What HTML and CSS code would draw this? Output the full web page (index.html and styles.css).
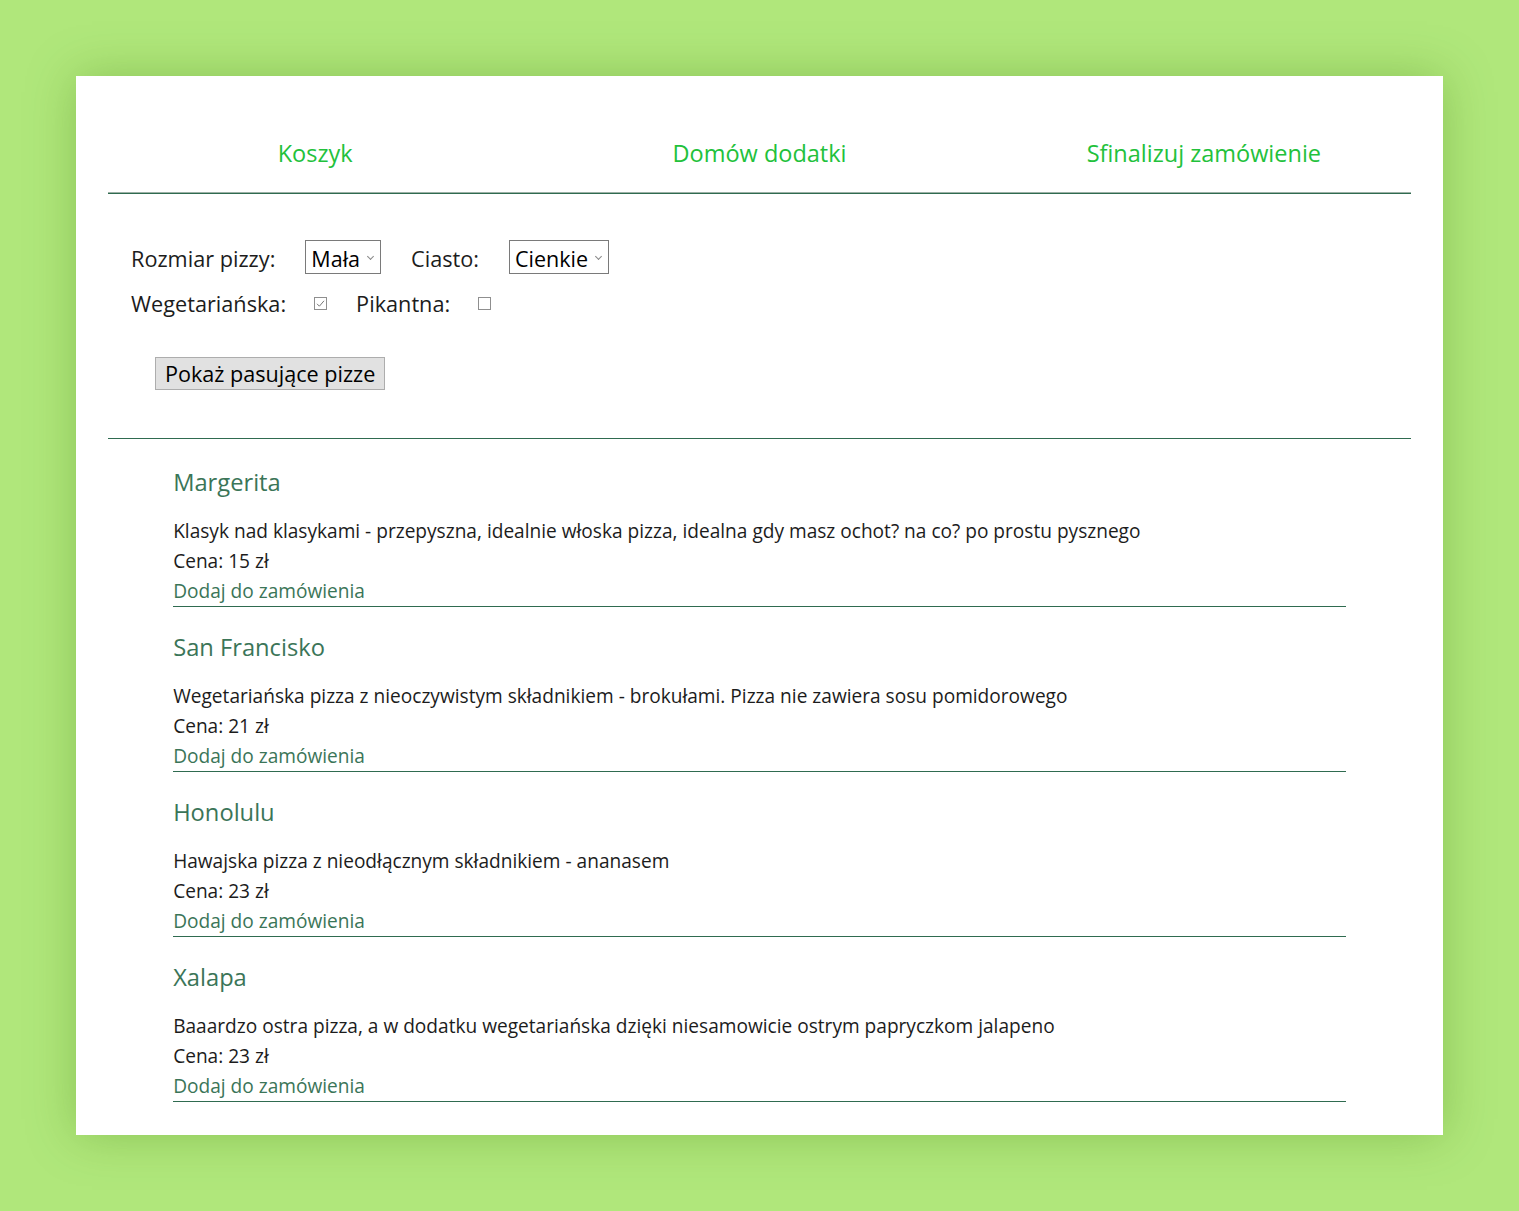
FILE: index.html
```
<!DOCTYPE html>
<html lang="pl">
<head>
<meta charset="utf-8">
<title>Pizza</title>
<link rel="stylesheet" href="styles.css">
</head>
<body>
<div class="page">
  <nav class="nav">
    <a class="nav-link" href="#">Koszyk</a>
    <a class="nav-link" href="#">Domów dodatki</a>
    <a class="nav-link" href="#">Sfinalizuj zamówienie</a>
  </nav>
  <form class="filters">
    <div class="row">
      <span class="label">Rozmiar pizzy:</span>
      <span class="select select-size">Mała<span class="chev"></span></span>
      <span class="label">Ciasto:</span>
      <span class="select select-dough">Cienkie<span class="chev"></span></span>
    </div>
    <div class="row row-checks">
      <span class="label">Wegetariańska:</span>
      <span class="check"><svg viewBox="0 0 13 13" width="13" height="13"><path d="M3 6.8 L5.4 9.2 L10 3.8" fill="none" stroke="#777" stroke-width="1"/></svg></span>
      <span class="label">Pikantna:</span>
      <span class="check"></span>
    </div>
    <div class="btn-row"><span class="btn">Pokaż pasujące pizze</span></div>
  </form>
  <div class="list">
    <div class="item">
      <h3 class="title">Margerita</h3>
      <p class="desc">Klasyk nad klasykami - przepyszna, idealnie włoska pizza, idealna gdy masz ochot? na co? po prostu pysznego</p>
      <p class="price">Cena: 15 zł</p>
      <a class="add" href="#">Dodaj do zamówienia</a>
    </div>
    <div class="item">
      <h3 class="title">San Francisko</h3>
      <p class="desc">Wegetariańska pizza z nieoczywistym składnikiem - brokułami. Pizza nie zawiera sosu pomidorowego</p>
      <p class="price">Cena: 21 zł</p>
      <a class="add" href="#">Dodaj do zamówienia</a>
    </div>
    <div class="item">
      <h3 class="title">Honolulu</h3>
      <p class="desc">Hawajska pizza z nieodłącznym składnikiem - ananasem</p>
      <p class="price">Cena: 23 zł</p>
      <a class="add" href="#">Dodaj do zamówienia</a>
    </div>
    <div class="item">
      <h3 class="title">Xalapa</h3>
      <p class="desc">Baaardzo ostra pizza, a w dodatku wegetariańska dzięki niesamowicie ostrym papryczkom jalapeno</p>
      <p class="price">Cena: 23 zł</p>
      <a class="add" href="#">Dodaj do zamówienia</a>
    </div>
  </div>
</div>
</body>
</html>
```

FILE: styles.css
```
* { box-sizing: border-box; }
html, body { margin: 0; padding: 0; }
body {
  background: #b0e77b;
  font-family: "Open Sans", "Noto Sans", sans-serif;
  color: #1c1c1c;
  padding: 76px 0 76px;
}
.page {
  margin: 0 76px;
  background: #fff;
  padding: 32px 32px 33px;
  box-shadow: 0 0 45px rgba(70, 130, 20, 0.35);
}
.nav {
  display: grid;
  grid-template-columns: 1fr 1fr 1fr;
  column-gap: 30px;
  padding: 29px 0 24px;
  border-bottom: 1px solid #2f6b50;
  box-shadow: inset 0 -1px 0 #9db1a6;
}
.nav-link {
  text-align: center;
  color: #22c13b;
  text-decoration: none;
  font-size: 23.5px;
  line-height: 32px;
}
.filters {
  padding: 46px 0 48px 23px;
  border-bottom: 1px solid #2f6b50;
  font-size: 21.7px;
}
.row {
  display: flex;
  align-items: center;
  height: 33px;
}
.row-checks { margin-top: 14px; height: 32px; }
.label { margin-right: 30px; line-height: 33px; padding-top: 3px; }
.row-checks .label { padding-top: 0; }
.label + .check { margin-left: -2px; }
.select {
  position: relative;
  display: inline-flex;
  align-items: center;
  height: 34px;
  border: 1px solid #7a7a7a;
  padding: 4px 20px 0 5px;
  margin-right: 30px;
  color: #000;
  font-size: 21.5px;
}
.chev {
  position: absolute;
  right: 7px;
  top: 13px;
  width: 5px;
  height: 5px;
  border-right: 1px solid #888;
  border-bottom: 1px solid #888;
  transform: rotate(45deg);
}
.check {
  width: 13px;
  height: 13px;
  border: 1px solid #8f8f8f;
  margin: 0 29px 0 0;
  display: inline-flex;
  background: #fff;
}
.check svg { display: block; margin: -1px; }
.btn-row { margin-top: 38px; padding-left: 24px; }
.btn {
  display: inline-block;
  background: #e1e1e1;
  border: 1px solid #adadad;
  padding: 0 9px;
  height: 33px;
  line-height: 31px;
  font-size: 21.6px;
  color: #000;
}
.list {
  display: flex;
  flex-direction: column;
  gap: 24px;
  padding-top: 27px;
}
.item {
  margin: 0 5%;
  border-bottom: 1px solid #2f6b50;
}
.title {
  margin: 0 0 18px;
  font-weight: normal;
  font-size: 23.7px;
  line-height: 32px;
  color: #3b7558;
}
.desc, .price {
  margin: 0;
  font-size: 19.1px;
  line-height: 30px;
}
.add {
  display: block;
  font-size: 19.1px;
  line-height: 30px;
  color: #3b7558;
  text-decoration: none;
}
```
